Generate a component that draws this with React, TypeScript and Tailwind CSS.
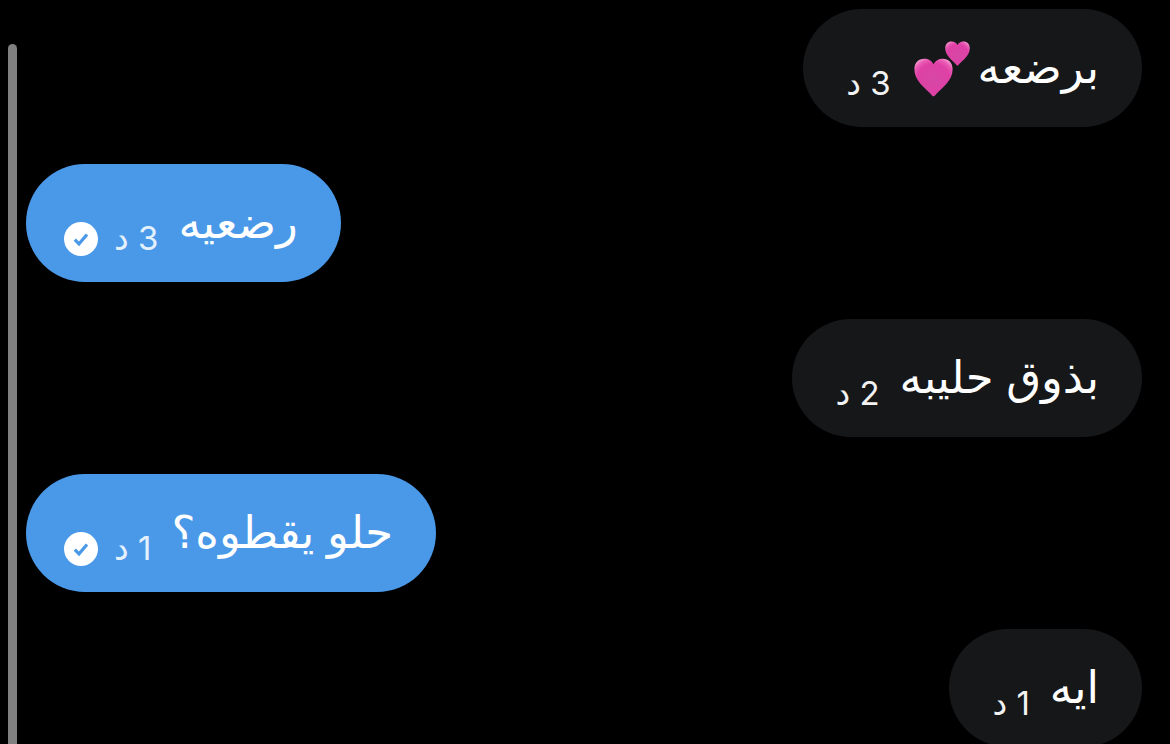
import React from 'react';

interface Message {
  id: string;
  text: string;
  age: string;
  sent: boolean;
  hearts?: boolean;
}

const messages: Message[] = [
  { id: 'm1', text: 'برضعه', age: '3', sent: false, hearts: true },
  { id: 'm2', text: 'رضعيه', age: '3', sent: true },
  { id: 'm3', text: 'بذوق حليبه', age: '2', sent: false },
  { id: 'm4', text: 'حلو يقطوه؟', age: '1', sent: true },
  { id: 'm5', text: 'ايه', age: '1', sent: false },
];

const HEART = 'M50 98 C48 98 46 96 43 92 C27 76 1 58 1 29 C1 12 12 2 26 2 C37 2 46 7 50 16 C54 7 63 2 74 2 C88 2 99 12 99 29 C99 58 73 76 57 92 C54 96 52 98 50 98 Z';

const TwoHearts: React.FC = () => (
  <svg viewBox="-3 0 59 56" className="h-14 w-[59px] shrink-0" role="img" aria-label="💕">
    <defs>
      <radialGradient id="heart-fill" cx="50%" cy="56%" r="66%">
        <stop offset="0" stopColor="#d648a6" />
        <stop offset="0.65" stopColor="#df40a5" />
        <stop offset="0.84" stopColor="#ea5cb4" />
        <stop offset="1" stopColor="#f9a3d8" />
      </radialGradient>
    </defs>
    <path d={HEART} transform="translate(0 17) scale(.39 .39)" fill="url(#heart-fill)" />
    <path d={HEART} transform="translate(31 0) scale(.25 .25)" fill="url(#heart-fill)" />
  </svg>
);

const SeenBadge: React.FC = () => (
  <svg viewBox="0 0 34 34" className="size-[34px] shrink-0" role="img" aria-label="✓">
    <circle cx="17" cy="17" r="17" fill="#fff" />
    <path d="M10.8 17.6 L15 21.8 L23 12.5" fill="none" stroke="#4a99e9" strokeWidth="3.2" />
  </svg>
);

const Bubble: React.FC<{ message: Message }> = ({ message }) => (
  <li
    className={
      message.sent
        ? 'flex h-[118px] shrink-0 items-end gap-4 self-end rounded-full bg-[#4a99e9] pr-[43px] pl-[38px] pb-[26px]'
        : 'flex h-[118px] shrink-0 items-end gap-4 self-start rounded-full bg-[#161719] px-[43px] pb-[26px]'
    }
  >
    <div className="flex items-end gap-5">
      <div className="flex items-end gap-2 pb-1">
        <p className="text-[45px] leading-[60px]">{message.text}</p>
        {message.hearts && <TwoHearts />}
      </div>
      <time className={message.sent ? 'text-[33px] leading-9 text-[#e4f0fc]' : 'text-[33px] leading-9 text-[#f2f2f2]'}>
        {message.age} د
      </time>
    </div>
    {message.sent && <SeenBadge />}
  </li>
);

const App: React.FC = () => {
  return (
    <main
      dir="rtl"
      className="flex h-screen overflow-hidden bg-black font-['Inter','DejaVu_Sans',sans-serif] text-white"
    >
      <ul className="flex flex-1 flex-col gap-[37px] pt-[9px] pr-7 pl-[9px]">
        {messages.map((message) => (
          <Bubble key={message.id} message={message} />
        ))}
      </ul>
      {/* Scroll indicator */}
      <div className="mt-11 ml-2 w-[9px] rounded-t-full bg-[#808080]"></div>
    </main>
  );
};

export default App;
